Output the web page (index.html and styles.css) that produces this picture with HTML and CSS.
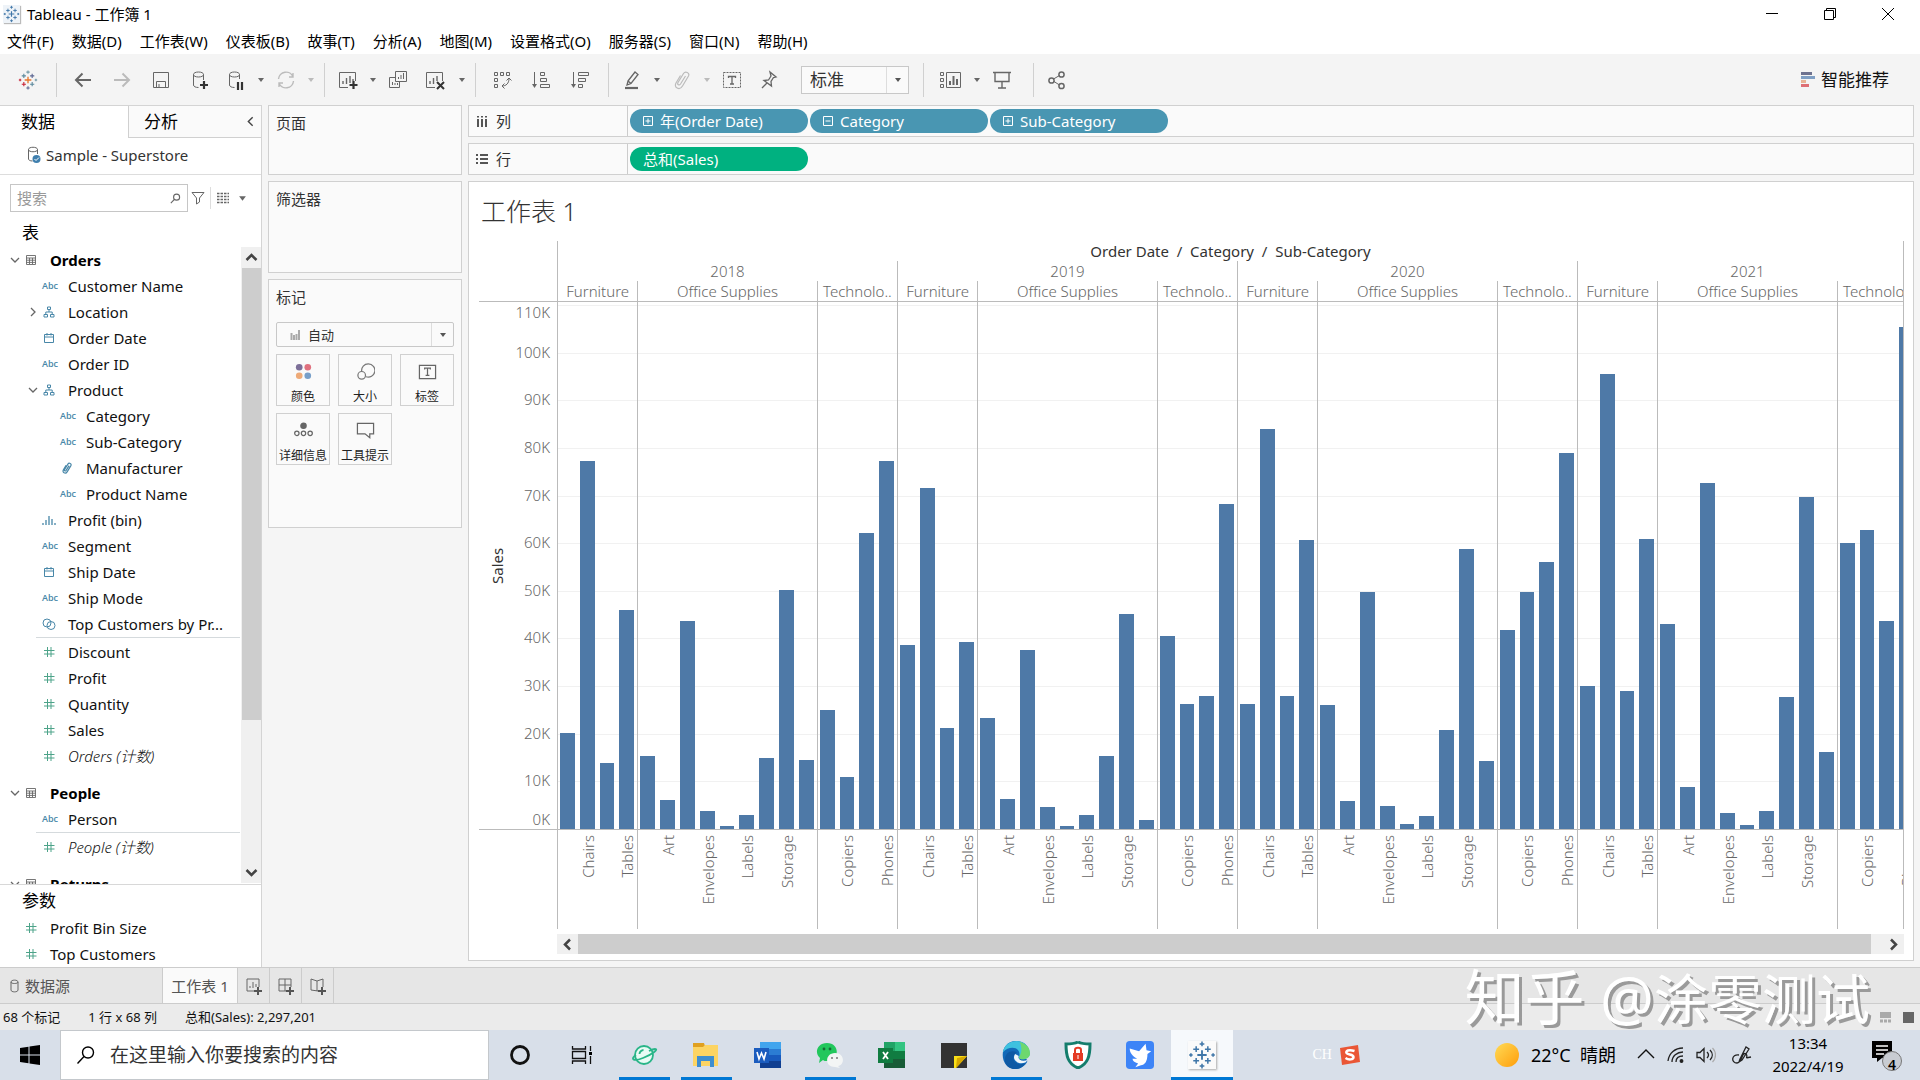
FILE: index.html
```html
<!DOCTYPE html>
<html lang="zh-CN">
<head>
<meta charset="utf-8">
<title>Tableau - 工作簿 1</title>
<link rel="stylesheet" href="styles.css">
</head>
<body>
<svg class="defs" aria-hidden="true">
  <symbol id="tableau" viewBox="0 0 24 24"><path d="M12 8v8M8 12h8" stroke="var(--c1,#3f76a8)" stroke-width="1.6"/><path d="M7 4.500v5M4.500 7h5M17 14.500v5M14.500 17h5" stroke="var(--c2,#3f76a8)" stroke-width="1.3"/><path d="M17 4.500v5M14.500 7h5M12 19.500v4M10 21.500h4" stroke="var(--c3,#3f76a8)" stroke-width="1.300"/><path d="M7 14.500v5M4.500 17h5M2.500 10.500v3M1 12h3" stroke="var(--c4,#3f76a8)" stroke-width="1.300"/><path d="M12 .5v4M10 2.500h4M21.500 10.500v3M20 12h3" stroke="var(--c5,#3f76a8)" stroke-width="1.300"/></symbol>
  <symbol id="back" viewBox="0 0 20 20"><path d="M18 10H3M9.500 3.500 3 10l6.500 6.500" fill="none" stroke="currentColor" stroke-width="2"/></symbol>
  <symbol id="fwd" viewBox="0 0 20 20"><path d="M2 10h15M10.500 3.500 17 10l-6.500 6.500" fill="none" stroke="currentColor" stroke-width="2"/></symbol>
  <symbol id="save" viewBox="0 0 20 20"><path d="M2.500 2.500h15v15h-15zM5.500 17v-5.500h9V17M8 17v-3" fill="none" stroke="currentColor"/></symbol>
  <symbol id="dbadd" viewBox="0 0 20 20"><path d="M13.500 10V4.500M3.500 4.500V15c0 1.500 2 2.500 5 2.500M3.500 4.500c0-1.500 2-2.500 5-2.500s5 1 5 2.500S11.500 7 8.500 7s-5-1-5-2.500" fill="none" stroke="currentColor"/><path d="M14 11v8M10 15h8" stroke="#333" stroke-width="2.200"/></symbol>
  <symbol id="dbpause" viewBox="0 0 20 20"><path d="M13.500 9V4.500M3.500 4.500V15c0 1.500 2 2.500 5 2.500M3.500 4.500c0-1.500 2-2.500 5-2.500s5 1 5 2.500S11.500 7 8.500 7s-5-1-5-2.500" fill="none" stroke="currentColor"/><path d="M12 12v8M16 12v8" stroke="#333" stroke-width="2.200"/></symbol>
  <symbol id="refresh" viewBox="0 0 20 20"><path d="M2.500 9A7.500 7.500 0 0 1 17 7M17.500 11A7.500 7.500 0 0 1 3 13M17 3v4h-4M3 17v-4h4" fill="none" stroke="currentColor" stroke-width="1.400"/></symbol>
  <symbol id="sheetadd" viewBox="0 0 20 20"><path d="M10 17.500H1.500v-15h16V11" fill="none" stroke="currentColor"/><path d="M5 14v-3M8.500 14V8M12 13V6M15 11V9" stroke="currentColor" stroke-width="1.400"/><path d="M15.500 11v8M11.500 15h8" stroke="#333" stroke-width="2.200"/></symbol>
  <symbol id="dup" viewBox="0 0 20 20"><path d="M7.500 1.500h11v10h-11zM7 7.500H1.500v10h10V12M10.500 9V7M13 9V5M15.500 9V3M4.500 15v-3M7 15v-2M9.500 15v-2" fill="none" stroke="currentColor"/></symbol>
  <symbol id="clear" viewBox="0 0 20 20"><path d="M10 17.500H1.500v-15h16V11" fill="none" stroke="currentColor"/><path d="M5 14v-3M8.500 14V8M12 11V6" stroke="currentColor" stroke-width="1.400"/><path d="m12 12 7 7m0-7-7 7" stroke="#333" stroke-width="2"/></symbol>
  <symbol id="swap" viewBox="0 0 20 20"><path d="M2.500 2.500h3v3h-3zM8.500 2.500h3v3h-3zM14.500 2.500h3v3h-3zM2.500 8.500h3v3h-3zM2.500 14.500h3v3h-3zM17 8.500c0 5-3 7.500-7 7.500M14.500 10.500 17 8l2.500 2.500M12.500 13.500 10 16l2.500 2.500" fill="none" stroke="currentColor"/></symbol>
  <symbol id="asc" viewBox="0 0 20 20"><path d="M3.500 2v14M9.500 2.500h4v3h-4zM9.500 8.500h6v3h-6zM9.500 14.500h9v3h-9z" fill="none" stroke="currentColor"/><path d="M1 14h5l-2.500 4z" fill="currentColor"/></symbol>
  <symbol id="desc" viewBox="0 0 20 20"><path d="M3.500 2v14M8.500 2.500h10v3h-10zM8.500 8.500h7v3h-7zM8.500 14.500h4v3h-4z" fill="none" stroke="currentColor"/><path d="M1 14h5l-2.500 4z" fill="currentColor"/></symbol>
  <symbol id="marker" viewBox="0 0 20 20"><path d="m6 11 7-9 3 2.500-7 9-4 1.500zM6 11l3 2.500" fill="none" stroke="currentColor" stroke-width="1.300"/><path d="M3 18h13" stroke="currentColor" stroke-width="2.200"/></symbol>
  <symbol id="clip" viewBox="0 0 20 20"><path d="m13.500 6-5 8c-1.500 2-3.500.5-2.500-1.500l5.500-9c2-3 6.500-.5 5 2.500l-6 10c-3 5-9 1.500-6.500-3l4.500-7.500" fill="none" stroke="currentColor" stroke-width="var(--cw,1.200)"/></symbol>
  <symbol id="textbox" viewBox="0 0 20 20"><path d="M1.500 2.500h17v15h-17z" fill="none" stroke="currentColor" stroke-dasharray="2 1"/><path d="M6.500 8V6.500h7V8M10 6.500v7.500M8 14h4" fill="none" stroke="currentColor" stroke-width="1.300"/></symbol>
  <symbol id="pin" viewBox="0 0 20 20"><path d="m11 2 6 5-2.500.5-2.500 4 .5 4.500L5 10.500l4.500-.5L12 6zM8 13l-5 5" fill="none" stroke="currentColor" stroke-width="1.300"/></symbol>
  <symbol id="cards" viewBox="0 0 24 20"><path d="M2.500 2.500h3v3h-3zM2.500 8.500h3v3h-3zM2.500 14.500h3v3h-3zM8.500 2.500h14v15h-14z" fill="none" stroke="currentColor"/><path d="M12 15v-4M15.500 15V6M19 15V9" stroke="currentColor" stroke-width="2"/></symbol>
  <symbol id="present" viewBox="0 0 20 20"><path d="M1 2.500h18M3 3v8.500h14V3M10 12v6M6 18h8" fill="none" stroke="currentColor" stroke-width="1.400"/></symbol>
  <symbol id="share" viewBox="0 0 20 20"><path d="m6.500 9 6-3.500M7 11.500l5.500 3.500" stroke="currentColor"/><circle cx="4.500" cy="10.500" r="2.600" fill="none" stroke="currentColor" stroke-width="1.500"/><circle cx="14.500" cy="4.500" r="2.600" fill="none" stroke="currentColor" stroke-width="1.500"/><circle cx="14.500" cy="16" r="2.600" fill="none" stroke="currentColor" stroke-width="1.500"/></symbol>
  <symbol id="caret" viewBox="0 0 8 8"><path d="M1 2h6L4 6z" fill="currentColor"/></symbol>
  <symbol id="down" viewBox="0 0 12 12"><path d="m2 4 4 4 4-4" fill="none" stroke="currentColor" stroke-width="var(--w,1.300)"/></symbol>
  <symbol id="up" viewBox="0 0 12 12"><path d="m2 8 4-4 4 4" fill="none" stroke="currentColor" stroke-width="var(--w,1.300)"/></symbol>
  <symbol id="right" viewBox="0 0 12 12"><path d="m4 2 4 4-4 4" fill="none" stroke="currentColor" stroke-width="var(--w,1.300)"/></symbol>
  <symbol id="left" viewBox="0 0 12 12"><path d="M8 2 4 6l4 4" fill="none" stroke="currentColor" stroke-width="var(--w,1.300)"/></symbol>
  <symbol id="tbl" viewBox="0 0 12 12"><path d="M1.500 1.500h9v9h-9zM1.500 4h9M1.500 6.200h9M1.500 8.400h9M4.500 4v6M7.500 4v6" fill="none" stroke="currentColor" stroke-width=".9"/></symbol>
  <symbol id="hier" viewBox="0 0 12 12"><path d="M4.500 1h3v2.500h-3zM1 8.500h3.500V11H1zM7.500 8.500H11V11H7.500zM6 3.500V6M2.800 8.500V6h6.400v2.500" fill="none" stroke="currentColor"/></symbol>
  <symbol id="cal" viewBox="0 0 12 12"><path d="M1.500 2.500h9v8h-9zM1.500 5h9M4 1v2.500M8 1v2.500" fill="none" stroke="currentColor"/></symbol>
  <symbol id="hash" viewBox="0 0 12 12"><path d="M4.500 1v10M8 1v10M1 4.500h10.500M1 8h10.500" stroke="currentColor"/></symbol>
  <symbol id="bin" viewBox="0 0 14 12"><path d="M1 11V9M4 11V6M7 11V2M10 11V5M13 11V9" stroke="currentColor" stroke-width="1.300"/></symbol>
  <symbol id="set" viewBox="0 0 14 12"><circle cx="5" cy="5" r="4" fill="none" stroke="currentColor"/><circle cx="9" cy="7.500" r="4" fill="none" stroke="currentColor"/></symbol>
  <symbol id="ds" viewBox="0 0 14 18"><path d="M10.500 8V3.500M1.500 3.500V13c0 1 1.500 2 4 2M1.500 3.500c0-3 9-3 9 0s-9 3-9 0" fill="none" stroke="#666"/><circle cx="9.500" cy="13" r="4" fill="#3f7fae"/><path d="m7.500 13 1.500 1.500 3-3" fill="none" stroke="#fff"/></symbol>
  <symbol id="search" viewBox="0 0 20 20"><circle cx="12" cy="7.500" r="5.500" fill="none" stroke="currentColor" stroke-width="var(--w,1.500)"/><path d="M8 11.500 1.500 18.500" stroke="currentColor" stroke-width="var(--w,1.500)"/></symbol>
  <symbol id="funnel" viewBox="0 0 14 14"><path d="M1 1.500h12L8.500 7v4l-3 2V7z" fill="none" stroke="currentColor"/></symbol>
  <symbol id="list" viewBox="0 0 14 12"><path d="M1 1.500h12M1 4.500h12M1 7.500h12M1 10.500h12" stroke="currentColor" stroke-width="1.400" stroke-dasharray="2.500 1"/></symbol>
  <symbol id="plusbox" viewBox="0 0 10 10"><path d="M.5.500h9v9h-9zM2.500 5h5M5 2.500v5" fill="none" stroke="currentColor"/></symbol>
  <symbol id="minusbox" viewBox="0 0 10 10"><path d="M.5.500h9v9h-9zM2.500 5h5" fill="none" stroke="currentColor"/></symbol>
</svg>

<header class="titlebar">
  <svg class="app"><use href="#tableau"/></svg><span class="apptitle">Tableau - 工作簿 1</span>
  <button aria-label="最小化"><svg viewBox="0 0 12 12"><path d="M0 5.500h12" stroke="#000"/></svg></button>
  <button aria-label="还原"><svg viewBox="0 0 12 12"><path d="M.5 2.500h9v9h-9zM2.500 2.500v-2h9v9h-2" fill="none" stroke="#000"/></svg></button>
  <button aria-label="关闭"><svg viewBox="0 0 12 12"><path d="m0 0 12 12M12 0 0 12" stroke="#000"/></svg></button>
</header>
<nav class="menu"><button>文件(F)</button><button>数据(D)</button><button>工作表(W)</button><button>仪表板(B)</button><button>故事(T)</button><button>分析(A)</button><button>地图(M)</button><button>设置格式(O)</button><button>服务器(S)</button><button>窗口(N)</button><button>帮助(H)</button></nav>

<div class="toolbar">
  <button class="wide logo" aria-label="开始"><svg><use href="#tableau"/></svg></button><i class="sep"></i>
  <button class="wide" aria-label="撤消"><svg><use href="#back"/></svg></button>
  <button class="wide off" aria-label="重做"><svg><use href="#fwd"/></svg></button>
  <button class="wide" aria-label="保存"><svg><use href="#save"/></svg></button>
  <button class="wide" aria-label="新建数据源"><svg><use href="#dbadd"/></svg></button>
  <button aria-label="暂停更新"><svg><use href="#dbpause"/></svg></button><button class="caret" aria-label="更多"><svg><use href="#caret"/></svg></button>
  <button class="off" aria-label="刷新"><svg><use href="#refresh"/></svg></button><button class="caret off" aria-label="更多"><svg><use href="#caret"/></svg></button><i class="sep tight"></i>
  <button aria-label="新建工作表"><svg><use href="#sheetadd"/></svg></button><button class="caret" aria-label="更多"><svg><use href="#caret"/></svg></button>
  <button aria-label="复制"><svg><use href="#dup"/></svg></button>
  <button class="wide" aria-label="清除"><svg><use href="#clear"/></svg></button><button class="caret" aria-label="更多"><svg><use href="#caret"/></svg></button><i class="sep tight"></i>
  <button class="wide" aria-label="交换行和列"><svg><use href="#swap"/></svg></button>
  <button class="wide" aria-label="升序"><svg><use href="#asc"/></svg></button>
  <button class="wide" aria-label="降序"><svg><use href="#desc"/></svg></button><i class="sep"></i>
  <button aria-label="突出显示"><svg><use href="#marker"/></svg></button><button class="caret" aria-label="更多"><svg><use href="#caret"/></svg></button>
  <button class="off" aria-label="组成员"><svg><use href="#clip"/></svg></button><button class="caret off" aria-label="更多"><svg><use href="#caret"/></svg></button>
  <button aria-label="显示标记标签"><svg><use href="#textbox"/></svg></button>
  <button class="wide" aria-label="固定"><svg><use href="#pin"/></svg></button>
  <div class="combo fit"><select aria-label="适合"><option>标准</option></select><span><svg><use href="#caret"/></svg></span></div><i class="sep wider"></i>
  <button class="wide" aria-label="显示卡"><svg class="w24"><use href="#cards"/></svg></button><button class="caret" aria-label="更多"><svg><use href="#caret"/></svg></button>
  <button aria-label="演示模式"><svg><use href="#present"/></svg></button><i class="sep wider"></i>
  <button aria-label="共享"><svg><use href="#share"/></svg></button>
  <button class="showme"><svg viewBox="0 0 14 16"><path fill="#6e7390" d="M0 0h11v3H0z"/><path fill="#7f9fc4" d="M0 4h14v3H0z"/><path fill="#e8b394" d="M0 8h5v3H0z"/><path fill="#de6f74" d="M0 12h8v3H0z"/></svg>智能推荐</button>
</div>

<main>
  <aside class="data">
    <div class="dtabs"><button class="on">数据</button><button>分析<svg><use href="#left"/></svg></button></div>
    <div class="source"><svg><use href="#ds"/></svg>Sample - Superstore</div>
    <div class="find"><label><input type="text" placeholder="搜索" aria-label="搜索"><svg><use href="#search"/></svg></label><svg class="fn"><use href="#funnel"/></svg><i></i><svg class="fn"><use href="#list"/></svg><svg class="ct"><use href="#caret"/></svg></div>
    <h2>表</h2>
    <div class="treebox">
      <ul class="tree">
        <li class="tb"><svg class="ar"><use href="#down"/></svg><svg class="gray"><use href="#tbl"/></svg>Orders</li>
        <li><b>Abc</b>Customer Name</li>
        <li><svg class="ar"><use href="#right"/></svg><svg><use href="#hier"/></svg>Location</li>
        <li><svg><use href="#cal"/></svg>Order Date</li>
        <li><b>Abc</b>Order ID</li>
        <li><svg class="ar"><use href="#down"/></svg><svg><use href="#hier"/></svg>Product</li>
        <li class="sub"><b>Abc</b>Category</li>
        <li class="sub"><b>Abc</b>Sub-Category</li>
        <li class="sub"><svg><use href="#clip"/></svg>Manufacturer</li>
        <li class="sub"><b>Abc</b>Product Name</li>
        <li><svg><use href="#bin"/></svg>Profit (bin)</li>
        <li><b>Abc</b>Segment</li>
        <li><svg><use href="#cal"/></svg>Ship Date</li>
        <li><b>Abc</b>Ship Mode</li>
        <li><svg><use href="#set"/></svg>Top Customers by Pr...</li>
        <li class="rule"></li>
        <li class="m"><svg><use href="#hash"/></svg>Discount</li>
        <li class="m"><svg><use href="#hash"/></svg>Profit</li>
        <li class="m"><svg><use href="#hash"/></svg>Quantity</li>
        <li class="m"><svg><use href="#hash"/></svg>Sales</li>
        <li class="m it"><svg><use href="#hash"/></svg>Orders (计数)</li>
        <li class="tb gap"><svg class="ar"><use href="#down"/></svg><svg class="gray"><use href="#tbl"/></svg>People</li>
        <li><b>Abc</b>Person</li>
        <li class="rule"></li>
        <li class="m it"><svg><use href="#hash"/></svg>People (计数)</li>
        <li class="tb gap"><svg class="ar"><use href="#down"/></svg><svg class="gray"><use href="#tbl"/></svg>Returns</li>
      </ul>
      <div class="vbar"><svg><use href="#up"/></svg><i></i><svg class="end"><use href="#down"/></svg></div>
    </div>
    <section class="params"><h2>参数</h2>
      <ul class="tree"><li class="m"><svg><use href="#hash"/></svg>Profit Bin Size</li><li class="m"><svg><use href="#hash"/></svg>Top Customers</li></ul>
    </section>
  </aside>

  <div class="cardcol">
    <section class="card pages">页面</section>
    <section class="card filters">筛选器</section>
    <section class="card marks">标记
      <div class="combo type"><svg class="barico" viewBox="0 0 10 10"><path d="M1.500 10V3M4 10V5M6.500 10V4M9 10V0" stroke="#aaa" stroke-width="2"/></svg><select aria-label="标记类型"><option>自动</option></select><span><svg><use href="#caret"/></svg></span></div>
      <div class="mgrid">
        <button><svg viewBox="0 0 20 20"><circle cx="5.500" cy="5.500" r="3.500" fill="#7c6f98"/><circle cx="14.500" cy="5.500" r="3.500" fill="#e0717f"/><circle cx="5.500" cy="14.500" r="3.500" fill="#eeaa78"/><circle cx="14.500" cy="14.500" r="3.500" fill="#789fc9"/></svg>颜色</button>
        <button><svg viewBox="0 0 20 20" fill="none" stroke="#777" stroke-width="1.300"><path d="M6 10a7 7 0 1 1 4.500 5.500"/><circle cx="6" cy="14" r="4"/></svg>大小</button>
        <button><svg viewBox="0 0 20 20" fill="none" stroke="#666" stroke-width="1.300"><path d="M1.500 3.500h17v14h-17zM7 8V6.500h6V8M10 6.500V14M8 14h4"/></svg>标签</button>
        <button><svg viewBox="0 0 20 20" fill="none" stroke="#666" stroke-width="1.300"><circle cx="10" cy="5" r="2.800" fill="#666"/><circle cx="3" cy="13" r="2.300"/><circle cx="10" cy="13" r="2.300"/><circle cx="17" cy="13" r="2.300"/></svg>详细信息</button>
        <button><svg viewBox="0 0 20 20" fill="none" stroke="#666" stroke-width="1.300"><path d="M1.500 2.500h17v11h-4v4l-5-4h-8z"/></svg>工具提示</button>
      </div>
    </section>
  </div>

  <div class="view">
    <div class="shelf"><div class="sname"><svg viewBox="0 0 12 12"><path d="M2 1v1.500M6 1v1.500M10 1v1.500M2 4v8M6 4v8M10 4v8" stroke="#555" stroke-width="2"/></svg>列</div>
      <button class="pill"><svg><use href="#plusbox"/></svg>年(Order Date)</button><button class="pill"><svg><use href="#minusbox"/></svg>Category</button><button class="pill"><svg><use href="#plusbox"/></svg>Sub-Category</button></div>
    <div class="shelf"><div class="sname"><svg viewBox="0 0 12 12"><path d="M0 2h2M0 6h2M0 10h2M4 2h8M4 6h8M4 10h8" stroke="#555" stroke-width="2"/></svg>行</div>
      <button class="pill green">总和(Sales)</button></div>
    <section class="sheet">
      <h1>工作表 1</h1>
      <div class="chart">
        <div class="axis"><span class="axname">Sales</span><div class="ticks" id="ticks"></div></div>
        <div class="plot">
          <div class="ptitle">Order Date&nbsp; / &nbsp;Category&nbsp; / &nbsp;Sub-Category</div>
          <div class="years" id="years"><div class="grid" id="grid"></div></div>
        </div>
      </div>
      <div class="hbar"><svg><use href="#left"/></svg><i></i><svg class="end"><use href="#right"/></svg></div>
    </section>
  </div>
</main>

<footer class="tabs">
  <button class="dsrc"><svg viewBox="0 0 10 14"><path d="M1 3c0-2.500 7-2.500 7 0v8c0 2.500-7 2.500-7 0zM1 3c0 2 7 2 7 0" fill="none" stroke="#666"/></svg>数据源</button><button class="cur">工作表 1</button>
  <button class="new" aria-label="新建工作表"><svg viewBox="0 0 18 18"><path d="M10 14H2V2h12v8M5 11V9M8 11V5M11 10V7" fill="none" stroke="#666"/><path d="M13 10v8M9 14h8" stroke="#555" stroke-width="2"/></svg></button>
  <button class="new" aria-label="新建仪表板"><svg viewBox="0 0 18 18"><path d="M10 14H2V2h12v8M8 2v12M2 8h12" fill="none" stroke="#666"/><path d="M13 10v8M9 14h8" stroke="#555" stroke-width="2"/></svg></button>
  <button class="new" aria-label="新建故事"><svg viewBox="0 0 18 18"><path d="M9 14 2 13V2l6 2 6-2v8M8 4v10" fill="none" stroke="#666"/><path d="M13 10v8M9 14h8" stroke="#555" stroke-width="2"/></svg></button>
</footer>
<div class="status"><span>68 个标记</span><span>1 行 x 68 列</span><span>总和(Sales): 2,297,201</span>
  <svg class="modes" viewBox="0 0 40 12"><path d="M5 1h11v6H5z" fill="#aaa"/><path d="M5 10h11" stroke="#aaa" stroke-width="3" stroke-dasharray="3 1"/><path d="M28 1h11v11H28z" fill="#666"/></svg></div>

<div class="taskbar">
  <button class="start" aria-label="开始菜单"><svg viewBox="0 0 20 20"><path d="M0 3 8.500 1.800v7.700H0zM9.500 1.600 20 0v9.500H9.500zM0 10.500h8.500v7.700L0 17zM9.500 10.500H20V20L9.500 18.400z"/></svg></button>
  <label class="winfind"><svg><use href="#search"/></svg><input type="text" placeholder="在这里输入你要搜索的内容" aria-label="搜索 Windows"></label>
  <div class="apps">
    <button aria-label="Cortana"><svg viewBox="0 0 28 28"><circle cx="14" cy="14" r="8.500" fill="none" stroke="#111" stroke-width="2.800"/></svg></button>
    <button aria-label="任务视图"><svg viewBox="0 0 28 28"><path d="M4.500 5v3h13V5M4.500 23v-3h13v3M4.500 10.500h13v7h-13zM22.500 5v5M22.500 15v8" fill="none" stroke="#111" stroke-width="1.300"/><path d="M21 11h3v3h-3z"/></svg></button>
    <button class="run" aria-label="浏览器"><svg viewBox="0 0 28 28" fill="none" stroke="#29b588" stroke-width="1.800"><circle cx="14" cy="14" r="9" fill="#e8fbf4"/><path d="M6 14c-6 4-3 7 7 3s16-9 12-9c-2 0-4 1-6 2M9.500 13c0-2 2-4 4-4"/></svg></button>
    <button class="run" aria-label="文件资源管理器"><svg viewBox="0 0 28 28"><path fill="#e0a020" d="M1 2h11l1 3v4H1z"/><path fill="#fcd463" d="M1 6h10l2-2h13v21H1z"/><path fill="#3e8ed0" d="M5 15h17v11h-4v-6h-9v6H5z"/></svg></button>
    <button aria-label="Word"><svg viewBox="0 0 28 28"><path fill="#41a5ee" d="M6 1h21v7H6z"/><path fill="#2b7cd3" d="M6 8h21v6H6z"/><path fill="#185abd" d="M6 14h21v6H6z"/><path fill="#103f91" d="M6 20h21v7H6z"/><path fill="#1b5cbe" d="M0 7h15v15H0z"/><path d="m3 11 2 7 2.500-6L10 18l2-7" fill="none" stroke="#fff" stroke-width="1.600"/></svg></button>
    <button class="run" aria-label="微信"><svg viewBox="0 0 28 28"><path fill="#22c75c" d="M11 2c13 0 13 17 0 18-2 0-3 0-4-1l-4 3 1-5C-2 12 1 2 11 2"/><path fill="#f3f5f5" d="M19 12c10 0 10 12 3 13l2 2-5-1c-11 0-10-14 0-14"/><g fill="#176b36"><circle cx="8" cy="8" r="1.400"/><circle cx="14" cy="8" r="1.400"/></g><g fill="#777"><circle cx="16" cy="17" r="1"/><circle cx="21" cy="17" r="1"/></g></svg></button>
    <button aria-label="Excel"><svg viewBox="0 0 28 28"><path fill="#21a366" d="M6 1h11v9H6z"/><path fill="#33c481" d="M17 1h10v9H17z"/><path fill="#107c41" d="M6 10h21v8H6z"/><path fill="#185c37" d="M6 18h21v9H6z"/><path fill="#107c41" d="M0 7h15v15H0z"/><path d="m5 11 5 7M10 11l-5 7" stroke="#fff" stroke-width="1.800"/></svg></button>
    <button aria-label="便笺"><svg viewBox="0 0 28 28"><path fill="#333" d="M1 2h26v25H1z"/><path fill="#fbe018" d="M14 15h13L16 27h-2z"/><path fill="#d8a800" d="M27 15 16 27l1-10z"/></svg></button>
    <button class="run" aria-label="Edge"><svg viewBox="0 0 30 30"><path fill="#1269b8" d="M15 0C30 0 32 15 24 19c8 0-1 11-9 11C-4 30-4 0 15 0"/><path fill="#3ec1df" d="M1 12C4-4 28-4 30 13c0 7-10 8-12 5 4-12-10-14-17-6"/><path fill="#6dd86e" d="M19 1c8 2 11 7 11 12 0 7-10 8-12 5 3-5 4-10 1-17"/><path fill="#0e59a4" d="M3 21c0-9 7-12 13-9-8 5-3 16 9 12-7 10-21 7-22-3"/><path fill="#f0f6fa" d="M14 14c-4 6 3 12 11 9l3-3c-6 3-12 0-10-4z"/></svg></button>
    <button aria-label="安全"><svg viewBox="0 0 28 28"><path d="M14 1c4 2 8 2 12 2 0 12-2 20-12 24C4 23 2 15 2 3c4 0 8 0 12-2" fill="#fff" stroke="#147d6c" stroke-width="3"/><path fill="#e43b25" d="M9 12h10v8H9z"/><path d="M11 12V9c0-3 6-3 6 0v3" fill="none" stroke="#e43b25" stroke-width="2"/><path d="M14 14v4" stroke="#fff"/></svg></button>
    <button aria-label="飞鸟"><svg viewBox="0 0 30 30"><rect width="30" height="30" rx="4" fill="#3d84f7"/><path fill="#fff" d="m4 8 10 3 7-8 1 7 5 1-4 3c0 8-3 12-7 12l-6 2 3-4c-4-1-6-3-6-5h5C7 16 4 13 4 8"/></svg></button>
    <button class="run active" aria-label="Tableau"><svg class="tabl" viewBox="0 0 24 24"><use href="#tableau"/></svg></button>
  </div>
  <div class="tray">
    <span class="ch">CH</span>
    <svg class="sogou" viewBox="0 0 20 20"><path fill="#ea5635" d="m0 3 18-3 2 17-18 3z"/><path d="M14.500 6c-6-2-9 0-8 2s7 1 7 4-5 3-8 1" fill="none" stroke="#fff" stroke-width="2.500"/></svg>
    <i class="sun"></i><span class="wx">22°C&nbsp; 晴朗</span>
    <svg class="ic" viewBox="0 0 20 20"><path d="m2 13 8-8 8 8" fill="none" stroke="#111" stroke-width="1.400"/></svg>
    <svg class="ic" viewBox="0 0 20 20" fill="none" stroke="#222" stroke-width="1.300"><path d="M2 16C3 8 9 3 17 3M6 17c0-6 5-10 11-10M10 17c0-4 3-6 7-6"/><circle cx="15.500" cy="16" r="1.300" fill="#222"/></svg>
    <svg class="ic" viewBox="0 0 20 20" fill="none" stroke="#222" stroke-width="1.300"><path d="M1 7.500h3l4-4v13l-4-4H1zM11 7c2 2 2 4 0 6M14 5c3 3 3 7 0 10"/><path d="M16.500 3c4 4 4 10 0 14" stroke="#aaa"/></svg>
    <svg class="ic pen" viewBox="0 0 20 20" fill="none" stroke="#222" stroke-width="1.300"><path d="M8 14 14 2l3 2-7 11-3 2zM7 10c-8-1-8 8-2 8 5 0 5-12 9-9 3 3-3 5 5 3"/></svg>
    <div class="clock"><span>13:34</span><span>2022/4/19</span></div>
    <svg class="note" viewBox="0 0 32 32"><path d="M1 2h20v17H11l-5 4v-4H1z"/><path d="M5 7h12M5 11h12M5 15h8" stroke="#fff" stroke-width="1.500"/><circle cx="21" cy="22" r="9.500" fill="#c8ccd2" stroke="#777"/></svg>
    <span class="badge">4</span>
  </div>
</div>
<div class="mark"><span>知乎 @</span>涂零测试</div>
<script src="chart.js"></script>
</body>
</html>
```
FILE: styles.css
```css
* { box-sizing: border-box; }
body { margin: 0; height: 100vh; display: flex; flex-direction: column; overflow: hidden; position: relative; background: #f5f5f5; color: #000; font: 15px/20px "Noto Sans", "Noto Sans CJK SC", sans-serif; }
button, input, select { font: inherit; color: inherit; border: 0; background: none; padding: 0; margin: 0; border-radius: 0; outline: 0; }
h1, h2, ul { margin: 0; padding: 0; font-weight: 400; list-style: none; }
svg { flex: none; display: block; }
.defs { position: absolute; width: 0; height: 0; }

.titlebar { display: flex; align-items: center; height: 28px; background: #fff; padding-left: 3px; }
.app { width: 17px; height: 18px; background: #eef3f8; box-shadow: 1px 1px 1px #bbb; }
.apptitle { flex: 1; padding-left: 7px; }
.titlebar button { width: 58px; height: 28px; display: grid; place-items: center; }
.titlebar button:last-child { margin-right: 3px; }
.titlebar button svg { width: 12px; height: 12px; }
.menu { display: flex; gap: 18px; height: 26px; padding: 2px 7px; background: #fff; white-space: nowrap; }

.toolbar { display: flex; align-items: center; height: 51px; background: #f4f4f4; padding-left: 8px; color: #666; }
.toolbar button { width: 34px; height: 30px; display: grid; place-items: center; flex: none; }
.toolbar button svg { width: 20px; height: 20px; }
.toolbar button .w24 { width: 24px; }
.toolbar .wide { width: 39px; }
.toolbar .caret { width: 16px; }
.toolbar .caret svg, .combo span svg { width: 8px; height: 8px; }
.toolbar .off { color: #bbb; }
.logo { --c1: #e8762c; --c2: #59879b; --c3: #5b6591; --c4: #c72035; --c5: #7199a6; }
.sep { width: 1px; height: 34px; background: #d0d0d0; margin: 0 6px 0 9px; flex: none; }
.sep.wider { margin-left: 14px; }
.sep.tight { margin-left: 5px; }
.combo { display: flex; align-items: center; border: 1px solid #c8c8c8; background: #fafafa; position: relative; }
.combo select { appearance: none; flex: 1; min-width: 0; height: 100%; padding: 0 8px; color: #333; }
.combo span { align-self: stretch; width: 22px; border-left: 1px solid #ddd; display: grid; place-items: center; color: #555; pointer-events: none; }
.fit { width: 108px; height: 28px; margin-left: 13px; font-size: 17px; }
.toolbar .showme { display: flex; align-items: center; width: auto; gap: 6px; margin: 0 31px 0 auto; font-size: 17px; color: #111; }
.toolbar .showme svg { width: 14px; height: 16px; }

main { flex: 1; min-height: 0; display: flex; gap: 6px; padding-right: 6px; }
.data { width: 262px; flex: none; display: flex; flex-direction: column; background: #fff; border: solid #d4d4d4; border-width: 1px 1px 0 0; }
.dtabs { display: flex; height: 32px; flex: none; font-size: 17px; }
.dtabs button { flex: 1; display: flex; justify-content: space-between; align-items: center; padding: 0 4px 0 15px; background: #fafafa; border: solid #d0d0d0; border-width: 0 0 1px 1px; }
.dtabs .on { flex: 0 0 128px; padding-left: 21px; background: #fff; border: 0; }
.dtabs svg { width: 13px; height: 13px; color: #444; }
.source { display: flex; align-items: center; gap: 5px; height: 37px; flex: none; padding: 0 0 2px 27px; border-bottom: 1px solid #ddd; color: #333; }
.source svg { width: 14px; height: 18px; }
.find { display: flex; align-items: center; height: 46px; flex: none; padding-left: 10px; color: #666; }
.find label { display: flex; align-items: center; width: 178px; height: 28px; border: 1px solid #c6c6c6; padding: 0 6px; }
.find input { flex: 1; min-width: 0; }
input::placeholder { color: #999; opacity: 1; }
.find label svg { width: 11px; height: 11px; --w: 2; }
.find .fn { width: 14px; height: 14px; margin: 0 3px; }
.find i { width: 1px; height: 22px; background: #ddd; margin: 0 2px; }
.find .ct { width: 9px; height: 9px; margin-left: 5px; }
.data h2 { font-size: 17px; line-height: 24px; height: 26px; padding-left: 22px; flex: none; }
.treebox { flex: 1; min-height: 0; display: flex; overflow: hidden; }
.treebox .tree { flex: 1; min-width: 0; }
.tree li { display: flex; align-items: center; height: 26px; padding-left: 42px; color: #111; white-space: nowrap; }
.tree svg { width: 14px; height: 12px; margin-right: 12px; color: #4887a8; --cw: 2; }
.tree .ar { width: 12px; height: 12px; color: #666; }
.tree li > .ar { margin-left: -15px; margin-right: 3px; }
.tree b { width: 26px; font: 600 9px/12px "Open Sans", sans-serif; color: #4887a8; }
.tree .sub { padding-left: 60px; }
.tree .m svg { color: #4da389; }
.tree .tb { padding-left: 24px; font-weight: 700; color: #000; }
.tree .tb .gray { color: #666; }
.tree .it { font-style: italic; font-weight: 300; }
.tree .gap { margin-top: 11px; }
.tree .rule { height: 1px; margin: 0 1px 1px 36px; background: #d5dadd; }
.vbar { width: 20px; background: #f0f0f0; display: flex; flex-direction: column; align-items: center; color: #444; --w: 2; margin: 0 0 1px; }
.vbar svg { width: 15px; height: 21px; }
.vbar i { width: 19px; height: 71%; background: #cdcdcd; }
.end { margin-top: auto; }
.params { flex: none; border-top: 1px solid #d8d8d8; padding-top: 4px; height: 83px; }
.params .tree li { padding-left: 24px; }

.cardcol { width: 194px; flex: none; display: flex; flex-direction: column; gap: 6px; }
.card { border: 1px solid #d0d0d0; background: #fafafa; padding: 7px; color: #333; }
.pages { height: 70px; }
.filters { height: 92px; }
.marks { height: 249px; }
.type { height: 25px; margin: 15px 0 7px; font-size: 13px; border-radius: 2px; }
.type select { padding-left: 8px; }
.barico { width: 10px; height: 10px; margin-left: 13px; }
.mgrid { display: grid; grid-template-columns: repeat(3, 1fr); gap: 7px 8px; }
.mgrid button { height: 52px; border: 1px solid #d0d0d0; display: flex; flex-direction: column; align-items: center; justify-content: space-between; padding: 7px 0 0; font-size: 12px; line-height: 16px; white-space: nowrap; color: #222; }
.mgrid svg { width: 19px; height: 19px; }

.view { flex: 1; min-width: 0; display: flex; flex-direction: column; gap: 6px; padding-bottom: 6px; }
.shelf { height: 32px; flex: none; display: flex; align-items: center; gap: 2px; border: 1px solid #d0d0d0; background: #fafafa; }
.sname { width: 159px; align-self: stretch; display: flex; align-items: center; gap: 8px; padding-left: 7px; border-right: 1px solid #ccc; color: #333; }
.sname svg { width: 12px; height: 12px; }
.pill { width: 178px; height: 24px; border-radius: 12px; background: #4996b2; color: #fff; display: flex; align-items: center; gap: 7px; padding: 0 13px; white-space: nowrap; }
.pill svg { width: 10px; height: 10px; }
.green { background: #00b180; }
.sheet { flex: 1; min-height: 0; display: flex; flex-direction: column; background: #fff; border: 1px solid #d0d0d0; padding: 11px 9px 6px 10px; }
h1 { font-size: 25px; line-height: 36px; font-weight: 300; color: #333; padding-left: 2px; height: 48px; }
.chart { flex: 1; min-height: 0; display: flex; color: #666; font-weight: 300; }
.axis { width: 78px; flex: none; display: flex; justify-content: space-between; margin: 60px 0 99px; border: solid #bbb; border-width: 1px 0; }
.axname { writing-mode: vertical-rl; transform: rotate(180deg); text-align: center; color: #333; font-weight: 400; margin-left: 8px; }
.ticks, .grid { display: grid; grid-template-rows: 3px repeat(11, 1fr); }
.ticks { padding-right: 7px; text-align: right; }
.ticks span { grid-column: 1; height: 20px; margin-top: -11px; }
.ticks span:first-child { margin-top: -3px; }
.ticks span:last-child { align-self: end; margin: 0; }
.plot { flex: 1; min-width: 0; display: flex; flex-direction: column; border: solid #bbb; border-width: 0 1px; overflow: hidden; }
.ptitle { height: 20px; text-align: center; color: #333; font-weight: 400; flex: none; }
.years { flex: 1; min-height: 0; display: flex; position: relative; }
.grid { position: absolute; inset: 40px 0 99px; border: solid #bbb; border-width: 1px 0; }
.grid i { border-top: 1px solid #f1f1f1; }
.year { flex: 0 0 340px; display: flex; flex-direction: column; position: relative; }
.year, .cat { border-right: 1px solid #bbb; }
.cat:last-child { border-right: 0; }
.yname { height: 20px; text-align: center; flex: none; }
.cats { flex: 1; min-height: 0; display: flex; }
.cat { flex: 4 0 0; min-width: 0; display: flex; flex-direction: column; }
.cat:nth-child(2) { flex-grow: 9; }
.cname { height: 21px; flex: none; text-align: center; white-space: nowrap; }
.bars { flex: 1; min-height: 0; display: flex; align-items: flex-end; }
.bars i { flex: 1; height: 0; margin: 0 3px 0 2px; background: #4e79a7; }
.names { height: 100px; flex: none; display: flex; padding-top: 6px; }
.names span { flex: 1; min-width: 0; display: flex; align-items: flex-start; justify-content: center; }
.names em { font-style: normal; writing-mode: vertical-rl; transform: rotate(180deg); }
.hbar { display: flex; align-items: center; height: 20px; flex: none; margin: 5px 0 0 78px; background: #f0f0f0; color: #444; --w: 2; }
.hbar svg { width: 21px; height: 15px; }
.hbar i { width: 96%; height: 20px; background: #cdcdcd; }
.hbar .end { margin: 0 0 0 auto; }

.tabs { display: flex; height: 37px; flex: none; background: #e6e6e6; border: solid #ccc; border-width: 1px 0; color: #555; }
.tabs button { border-right: 1px solid #ccc; display: flex; align-items: center; justify-content: center; }
.dsrc { width: 163px; gap: 5px; }
.tabs .dsrc { justify-content: flex-start; padding-left: 10px; }
.dsrc svg { width: 10px; height: 14px; }
.cur { width: 75px; background: #fafafa; }
.new { width: 32px; }
.new svg { width: 18px; height: 18px; }
.status { display: flex; align-items: center; gap: 28px; height: 26px; flex: none; background: #ebebeb; padding: 0 5px 0 3px; font-size: 13px; color: #111; }
.modes { width: 40px; height: 12px; margin-left: auto; }

.taskbar { display: flex; height: 50px; flex: none; background: #d8dfe9; }
.start { width: 60px; display: grid; place-items: center; }
.start svg { width: 20px; height: 20px; }
.winfind { width: 429px; display: flex; align-items: center; gap: 14px; padding-left: 15px; background: #fff; border: 1px solid #c4c8cc; font-size: 19px; }
.winfind svg { width: 20px; height: 20px; --w: 1.4; }
.winfind input { flex: 1; }
.winfind input::placeholder { color: #333; }
.apps { display: flex; }
.apps button { width: 62px; display: grid; place-items: center; border: solid transparent; border-width: 3px 0; background-clip: padding-box; }
.apps svg { width: 28px; height: 28px; }
.apps .run { background: linear-gradient(#0078d4, #0078d4) center bottom / 51px 3px no-repeat border-box; }
.apps .active { border-top-color: #f6f9fc; background: linear-gradient(#0078d4, #0078d4) bottom / 100% 3px no-repeat border-box, #f6f9fc; }
.apps .tabl { background: #fafafa; box-shadow: 1px 1px 2px #aaa; }
.tray { flex: 1; display: flex; align-items: center; justify-content: flex-end; padding-right: 17px; position: relative; }
.ch { font: 14px/20px "Liberation Serif", serif; color: #fff; margin-right: 8px; }
.sogou { width: 20px; height: 20px; margin-right: 135px; }
.sun { width: 24px; height: 24px; border-radius: 50%; background: linear-gradient(135deg, #ffdb57, #ff9d0a); margin-right: 12px; }
.wx { font-size: 18px; margin-right: 20px; white-space: nowrap; }
.ic { width: 20px; height: 20px; margin-right: 10px; }
.pen { margin: 0 15px 0 6px; }
.clock { display: flex; flex-direction: column; align-items: center; line-height: 23px; width: 82px; margin-right: 22px; }
.note { width: 32px; height: 32px; }
.badge { position: absolute; right: 17px; bottom: 5px; width: 22px; text-align: center; font-weight: 600; font-size: 14px; }
.mark { position: absolute; right: 50px; bottom: 46px; font-size: 54px; line-height: 70px; color: #fff; text-shadow: 3px 3px 0 #9a9a9a; white-space: nowrap; pointer-events: none; }
.mark span { font-size: 60px; }
```
FILE: chart.js
```js
// Sales in thousands, one value for each sub-category, in axis order.
const SALES = {
  2018: [20.1, 77.4, 13.9, 46.1, 15.3, 6.1, 43.6, 3.8, 0.7, 3, 14.9, 50.3, 14.5, 25, 10.9, 62.1, 77.4],
  2019: [38.6, 71.7, 21.2, 39.2, 23.3, 6.3, 37.5, 4.6, 0.7, 3, 15.3, 45.1, 1.9, 40.5, 26.2, 27.9, 68.3],
  2020: [26.2, 84.1, 27.9, 60.8, 26, 5.9, 49.7, 4.8, 1, 2.7, 20.8, 58.9, 14.3, 41.9, 49.7, 56, 79],
  2021: [30, 95.6, 28.9, 61, 43, 8.8, 72.7, 3.4, 0.8, 3.8, 27.7, 69.8, 16.1, 60, 62.9, 43.6, 105.5]
};
const CATS = [
  ['Furniture', ['', 'Chairs', '', 'Tables']],
  ['Office Supplies', ['', 'Art', '', 'Envelopes', '', 'Labels', '', 'Storage', '']],
  ['Technolo..', ['', 'Copiers', '', 'Phones']]
];
const MAX = 110.7;

let ticks = '', lines = '';
for (let k = 110; k >= 0; k -= 10) {
  const row = k ? 13 - k / 10 : 12;
  ticks += `<span style="grid-row:${row}">${k}K</span>`;
  if (k) lines += `<i style="grid-row:${row}"></i>`;
}
document.getElementById('ticks').innerHTML = ticks;
document.getElementById('grid').innerHTML = lines;

let html = '';
for (const [year, values] of Object.entries(SALES)) {
  let at = 0, cats = '';
  for (const [name, subs] of CATS) {
    const bars = subs.map(() => `<i style="height:${(values[at++] / MAX * 100).toFixed(2)}%"></i>`).join('');
    const names = subs.map(s => `<span>${s ? `<em>${s}</em>` : ''}</span>`).join('');
    cats += `<div class="cat"><div class="cname">${name}</div><div class="bars">${bars}</div><div class="names">${names}</div></div>`;
  }
  html += `<div class="year"><div class="yname">${year}</div><div class="cats">${cats}</div></div>`;
}
document.getElementById('years').insertAdjacentHTML('beforeend', html);
```
